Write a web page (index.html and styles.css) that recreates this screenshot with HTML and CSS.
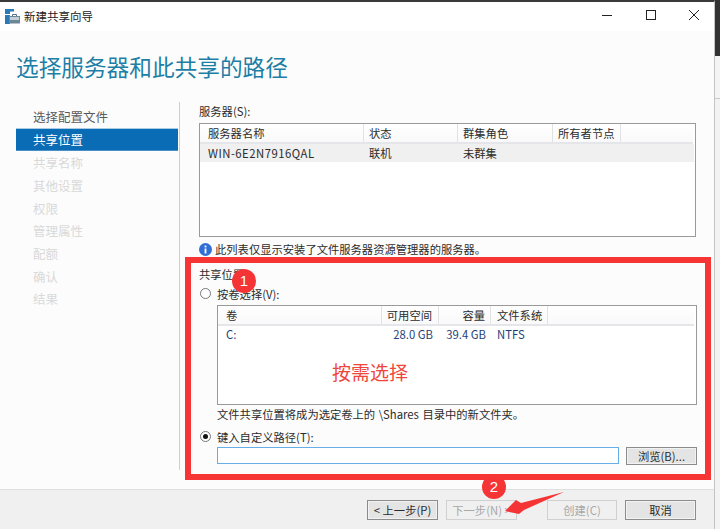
FILE: index.html
```html
<!DOCTYPE html>
<html lang="zh-CN">
<head>
<meta charset="utf-8">
<title>新建共享向导</title>
<link rel="stylesheet" href="styles.css">
</head>
<body>
<div class="window">
  <header class="titlebar">
    <svg class="appicon" width="15" height="15" viewBox="0 0 15 15">
      <rect x="0" y="0" width="5" height="15" fill="#2a7ab8"/>
      <rect x="0" y="0" width="9" height="2.500" fill="#2a7ab8"/>
      <rect x="0" y="5" width="5" height="1" fill="#fff"/>
      <path d="M4 7h11v7.500H4z" fill="#6d8796"/>
      <rect x="5" y="8" width="9" height="3" fill="#c3d0d8"/>
      <path d="M7.500 7V5.500h4V7" fill="none" stroke="#56707f"/>
    </svg>
    <span class="titletext">新建共享向导</span>
    <div class="winbtns">
      <svg width="12" height="12" viewBox="0 0 12 12"><path d="M1 6.500h10" stroke="#222" fill="none"/></svg>
      <svg width="12" height="12" viewBox="0 0 12 12"><rect x="1.500" y="1.500" width="9" height="9" stroke="#222" fill="none"/></svg>
      <svg width="12" height="12" viewBox="0 0 12 12"><path d="M1 1l10 10M11 1L1 11" stroke="#222" fill="none"/></svg>
    </div>
  </header>

  <div class="body">
    <h1 class="heading">选择服务器和此共享的路径</h1>
    <div class="columns">
      <nav class="steps">
        <div class="step done">选择配置文件</div>
        <div class="step current">共享位置</div>
        <div class="step">共享名称</div>
        <div class="step">其他设置</div>
        <div class="step">权限</div>
        <div class="step">管理属性</div>
        <div class="step">配额</div>
        <div class="step">确认</div>
        <div class="step">结果</div>
      </nav>

      <main class="panel">
        <section class="servers">
          <div class="label">服务器(S):</div>
          <div class="list server-list">
            <div class="row head">
              <span class="c name">服务器名称</span>
              <span class="c status">状态</span>
              <span class="c role">群集角色</span>
              <span class="c owner">所有者节点</span>
            </div>
            <div class="row selected">
              <span class="c name latin">WIN-6E2N7916QAL</span>
              <span class="c status">联机</span>
              <span class="c role">未群集</span>
            </div>
          </div>
          <div class="info">
            <svg width="13" height="13" viewBox="0 0 13 13"><circle cx="6.500" cy="6.500" r="6.500" fill="#2f6fd6"/><rect x="5.600" y="5.500" width="1.800" height="5" fill="#fff"/><rect x="5.600" y="2.600" width="1.800" height="1.800" fill="#fff"/></svg>
            <span>此列表仅显示安装了文件服务器资源管理器的服务器。</span>
          </div>
        </section>

        <section class="redbox">
          <div class="label">共享位置</div>
          <div class="radio-row first"><span class="radio"></span><span>按卷选择(V):</span></div>
          <div class="list vol-list">
            <div class="row head">
              <span class="c vol">卷</span>
              <span class="c free">可用空间</span>
              <span class="c cap">容量</span>
              <span class="c fs">文件系统</span>
            </div>
            <div class="row vol-row">
              <span class="c vol">C:</span>
              <span class="c free">28.0 GB</span>
              <span class="c cap">39.4 GB</span>
              <span class="c fs">NTFS</span>
            </div>
            <div class="callout">按需选择</div>
          </div>
          <div class="note">文件共享位置将成为选定卷上的 \Shares 目录中的新文件夹。</div>
          <div class="radio-row second"><span class="radio on"></span><span>键入自定义路径(T):</span></div>
          <div class="path-row">
            <div class="pathinput"></div>
            <button class="btn browse">浏览(B)...</button>
          </div>
        </section>
      </main>
    </div>
  </div>

  <footer class="footer">
    <button class="btn">&lt; 上一步(P)</button>
    <button class="btn off">下一步(N) &gt;</button>
    <button class="btn off create">创建(C)</button>
    <button class="btn cancel">取消</button>
  </footer>

  <span class="badge b1">1</span>
  <span class="badge b2">2</span>
  <svg class="arrow" width="64" height="32" viewBox="0 0 64 32"><path d="M1 22L12 11l5 3L60 3 20 21l-5 4z" fill="#f53535"/></svg>
</div>
<div class="edge"><div class="edge-top"></div><div class="edge-mid"></div></div>
</body>
</html>
```
FILE: styles.css
```css
* { box-sizing: border-box; }
html, body { margin: 0; height: 529px; overflow: hidden; }
body {
  display: flex;
  background: #f3f3f3;
  font: 11.300px/18px "Noto Sans CJK SC", "Liberation Sans", sans-serif;
  color: #2b2b2b;
}
.window {
  position: relative;
  width: 715px;
  height: 529px;
  flex: none;
  display: flex;
  flex-direction: column;
  background: #fcfcfc;
  border-top: 2px solid #3a3a3a;
  border-right: 1px solid #c4c4c4;
}
.edge { flex: 1; display: flex; flex-direction: column; }
.edge-top { height: 56px; background: #333; }
.edge-mid { height: 43px; background: #f4f4f4; border-bottom: 1px solid #c9c9c9; }

.titlebar {
  height: 29px;
  flex: none;
  display: flex;
  align-items: center;
  padding: 0 14px 1px 5px;
  background: #fff;
}
.appicon { margin-right: 4px; }
.titletext { font-size: 11.500px; color: #222; }
.winbtns { margin-left: auto; margin-bottom: 2px; display: flex; gap: 31.500px; }

.body { flex: 1; min-height: 0; display: flex; flex-direction: column; }
.heading {
  margin: 0;
  padding: 20px 0 0 16px;
  height: 71px;
  font-size: 22.670px;
  line-height: 32px;
  font-weight: 400;
  color: #1d7fa6;
}
.columns { display: flex; flex: 1; align-items: flex-start; }
.steps { width: 180px; height: 368px; flex: none; padding: 3px 0 0 16px; border-right: 1px solid #cfcfcf; margin-right: 5px; }
.step { width: 162px; height: 22.700px; padding-left: 17px; font-size: 12.500px; line-height: 23px; color: #d9d9d9; }
.step.done { color: #5a5a5a; }
.step.current { height: 23.500px; background: #0b6cb6; color: #fff; border-top: 1px solid #a9cbe6; border-bottom: 1px solid #4a90c8; line-height: 21px; }

.panel { flex: 1; display: flex; flex-direction: column; padding-top: 1px; }
.servers { padding-left: 14px; height: 153px; }
.label { line-height: 17px; height: 17px; }
.list { position: relative; background: #fff; border: 1px solid #9a9a9a; }
.server-list { width: 497px; height: 114px; margin-top: 3px; }
.row { display: flex; height: 20px; align-items: center; }
.head { background: linear-gradient(#fff, #f9f9f9); border-bottom: 2px solid #e4e6e9; margin-right: 2px; }
.c { display: block; height: 100%; padding-left: 8px; line-height: 18px; flex: none; }
.head .c { border-right: 1px solid #e2e2e2; }
.name { width: 164px; }
.latin { letter-spacing: 0.500px; }
.status { width: 94px; padding-left: 5px; }
.role { width: 95px; padding-left: 5px; }
.owner { width: 68px; padding-left: 5px; }
.selected { height: 18px; background: #f0f0f0; margin-right: 1px; }
.info { display: flex; align-items: center; gap: 3px; height: 18px; margin-top: 3px; }

.redbox {
  width: 526px;
  height: 223px;
  margin-top: 1px;
  border: 6px solid #f83535;
  padding: 3px 0 0 8px;
}
.radio-row { display: flex; align-items: center; height: 17px; }
.radio-row.first { margin-top: 2px; }
.radio-row.second { margin-top: 5px; }
.radio { width: 11px; height: 11px; margin: 0 6px 0 1px; border-radius: 50%; border: 1px solid #777; background: #fff; position: relative; }
.radio.on::after { content: ""; position: absolute; left: 2px; top: 2px; width: 5px; height: 5px; border-radius: 50%; background: #111; }
.vol-list { width: 480px; height: 100px; margin: 3px 0 0 18px; }
.vol { width: 164px; }
.free { width: 57px; padding: 0 6px 0 0; text-align: right; }
.cap { width: 52px; padding: 0 5px 0 0; text-align: right; }
.fs { width: 57px; padding-left: 6px; }
.vol-row { color: #1f3f78; height: 16px; margin-top: -1px; }
.callout { position: absolute; left: 114px; top: 53px; font-size: 19px; line-height: 26px; color: #f0453a; }
.note { margin: 0 0 0 18px; height: 18px; word-spacing: 1px; }
.path-row { display: flex; gap: 6px; margin: 2px 0 0 18px; }
.pathinput { width: 402px; height: 17px; background: #fff; border: 1px solid #66aee8; }

.btn {
  width: 71px;
  height: 20px;
  padding: 0;
  font: inherit;
  line-height: 16px;
  color: #2b2b2b;
  background: #e4e4e4;
  border: 1px solid #8c8c8c;
  box-shadow: inset 0 0 0 1px #f2f2f2;
}
.browse { height: 18px; margin-left: 1px; }
.btn.off { background: #f0f0f0; border-color: #d0d0d0; color: #a8a8a8; box-shadow: none; }

.footer {
  flex: none;
  height: 40px;
  display: flex;
  align-items: center;
  padding: 1px 0 0 367px;
  background: #f0f0f0;
  border-top: 1px solid #dfdfdf;
  gap: 8px;
}
.create { margin-left: 22px; width: 70px; }
.cancel { width: 71px; }

.badge {
  position: absolute;
  width: 24px;
  height: 24px;
  border-radius: 50%;
  background: #f53535;
  color: #fff;
  text-align: center;
  font: 15px/24px "Liberation Sans", sans-serif;
}
.b1 { left: 232px; top: 267px; }
.b2 { left: 482px; top: 473px; }
.arrow { position: absolute; left: 504px; top: 487px; }
```
